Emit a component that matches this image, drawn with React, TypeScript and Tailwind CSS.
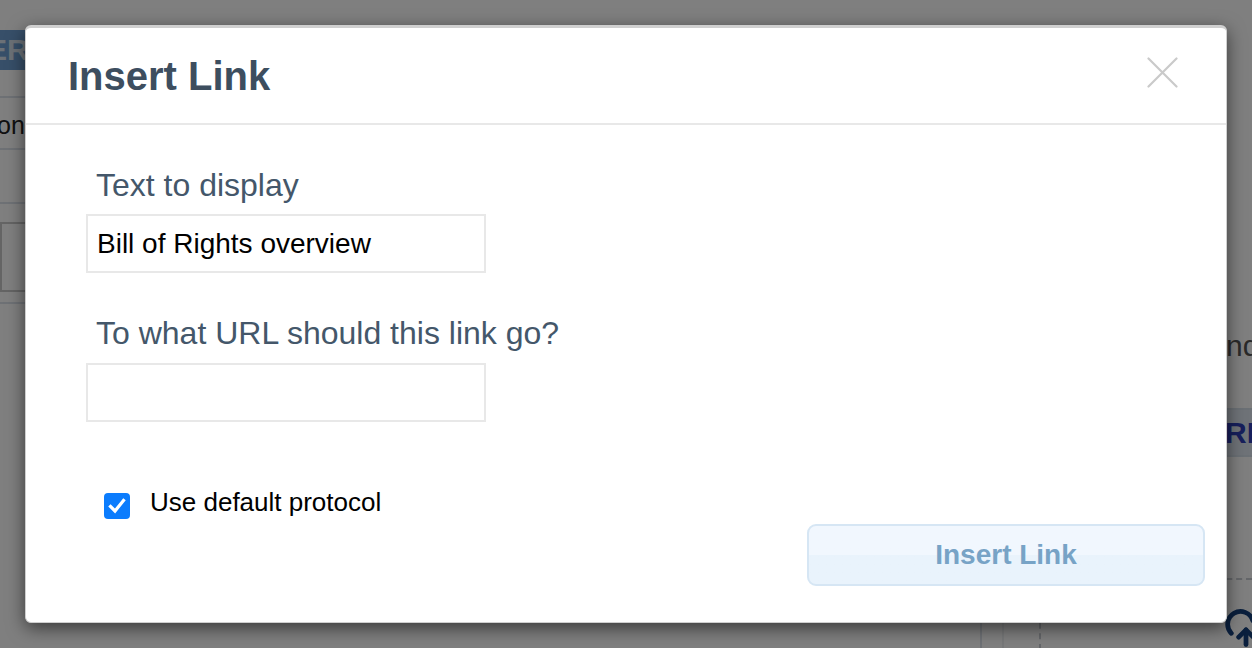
import React from 'react';
import { CloudUpload } from 'lucide-react';

const font = { fontFamily: '"Liberation Sans", Arial, sans-serif' };

const CloseIcon = () => (
  <svg width="31" height="31" viewBox="0 0 31 31" fill="none">
    <path d="M1.5 1.5 L29.5 29.5 M29.5 1.5 L1.5 29.5" stroke="#cacaca" strokeWidth="2.2" strokeLinecap="round" />
  </svg>
);

const Check = () => (
  <span className="flex w-[26px] h-[26px] items-center justify-center rounded-[4px] bg-[#0b7cfd]">
    <svg width="18" height="16" viewBox="0 0 18 16" fill="none">
      <path d="M2.5 8.5 L7 13 L15.5 2.5" stroke="white" strokeWidth="3.2" strokeLinecap="square" strokeLinejoin="miter" />
    </svg>
  </span>
);

// dimmed page that sits behind the dialog
const PageBehind = () => (
  <div className="flex h-full w-full bg-white">
    <div className="flex w-[60px] flex-col pt-[30px]">
      <div className="flex h-[40px] items-center overflow-hidden bg-[#6f9fd2] text-[30px] font-bold leading-none text-[#d8e3ee]">
        <span className="-ml-[13px]">ER</span>
      </div>
      <div className="mt-[26px] h-[2px] bg-[#dde3ea]" />
      <div className="-ml-[3px] pt-[12px] text-[25px] leading-[30px] text-[#222]">onc</div>
      <div className="mt-[8px] h-[2px] bg-[#dde3ea]" />
      <div className="mt-[52px] h-[2px] bg-[#dde3ea]" />
      <div className="mt-[18px] h-[70px] w-[48px] border-2 border-[#c9c9c9]" />
      <div className="mt-[10px] h-[2px] bg-[#dde3ea]" />
    </div>
    <div className="flex-1" />
    <div className="flex w-[272px] flex-col">
      <div className="mt-[314px] h-[2px] bg-[#dde3ea]" />
      <div className="pt-[14px] pl-[246px] text-[30px] leading-[36px] text-[#555]">nd</div>
      <div className="mt-[18px] h-[2px] bg-[#dde3ea]" />
      <div className="mt-[26px] flex h-[58px] items-center border-y-2 border-[#d7e0ea] bg-[#dfe6f0] pl-[245px] text-[30px] font-bold text-[#2f3fb8]">RI</div>
      <div className="mt-[121px] h-[2px] border-t-2 border-dashed border-[#c9ccd2]" />
      <div className="flex flex-1">
        <div className="w-[2px] bg-[#dde3ea]" />
        <div className="ml-[20px] w-[2px] bg-[#eef0f3]" />
        <div className="ml-[35px] w-0 border-l-2 border-dashed border-[#c9ccd2]" />
        <div className="ml-auto mr-[-16px] mt-[26px] text-[#143f7a]">
          <CloudUpload size={44} strokeWidth={2.6} />
        </div>
      </div>
    </div>
  </div>
);

const App: React.FC = () => {
  return (
    <div className="relative h-[648px] w-[1252px] overflow-hidden" style={font}>
      <PageBehind />
      <div className="absolute inset-0 bg-black/50" />

      <div className="absolute left-[25px] top-[25px] flex w-[1202px] flex-col rounded-[6px] border border-t-[3px] border-[#cfcfcf] bg-white shadow-[0_5px_18px_rgba(0,0,0,0.55)]">
        <header className="flex h-[97px] items-center justify-between border-b-2 border-[#e8e8e8] pl-[42px] pr-[48px]">
          <h1 className="text-[40px] font-bold leading-[46px] text-[#3d4e5f]">Insert Link</h1>
          <button className="mb-[6px] flex items-center justify-center">
            <CloseIcon />
          </button>
        </header>

        <div className="flex flex-col pl-[60px] pr-[21px] pt-[42px] pb-[36px]">
          <label className="ml-[10px] text-[32px] leading-[37px] text-[#44576a]">Text to display</label>
          <input
            readOnly
            value="Bill of Rights overview"
            className="mt-[10px] h-[59px] w-[400px] border-2 border-[#e8e8e8] px-[9px] text-[28px] text-black outline-none"
            style={font}
          />

          <label className="mt-[42px] ml-[10px] text-[32px] leading-[37px] text-[#44576a]">To what URL should this link go?</label>
          <input
            readOnly
            value=""
            className="mt-[11px] h-[59px] w-[400px] border-2 border-[#e8e8e8] px-[9px] text-[28px] text-black outline-none"
            style={font}
          />

          <div className="mt-[65px] flex items-start justify-between">
            <label className="ml-[18px] flex items-start gap-[20px]">
              <span className="mt-[6px]"><Check /></span>
              <span className="text-[26px] leading-[30px] text-black">Use default protocol</span>
            </label>
            <button className="mt-[37px] flex h-[62px] w-[398px] items-center justify-center rounded-[9px] border-2 border-[#d6e6f4] bg-gradient-to-b from-[#f1f7fe] from-50% to-[#e9f3fc] to-50% text-[28px] font-bold text-[#77a3c6]">
              Insert Link
            </button>
          </div>
        </div>
      </div>
    </div>
  );
};

export default App;
